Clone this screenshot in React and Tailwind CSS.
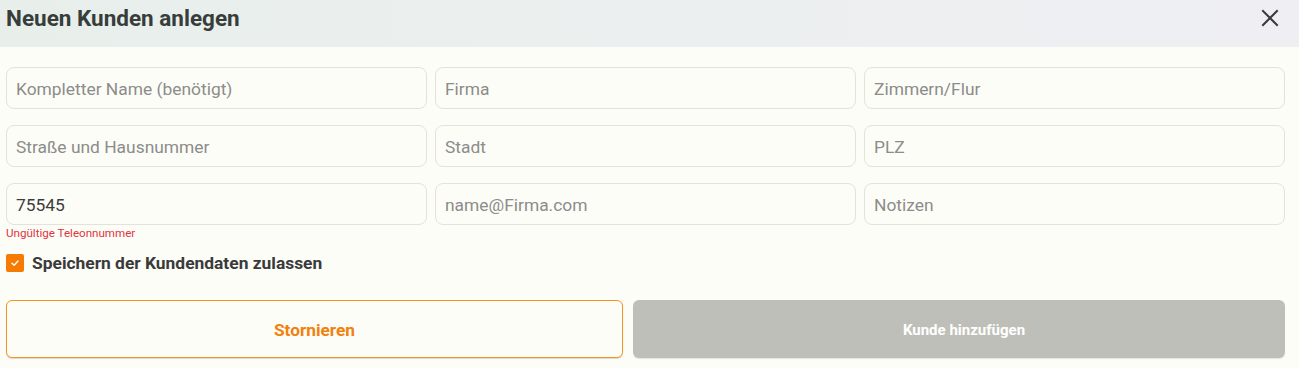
import React from "react";

function Field({ placeholder, value }) {
  return (
    <input
      readOnly
      placeholder={placeholder}
      defaultValue={value}
      className="h-[42px] w-full rounded-[8px] border border-[#e3e3dc] bg-[#fdfdf8] px-[9px] pt-[2px] text-[17.4px] text-[#3c3c3c] placeholder:text-[#8c8c8a] outline-none"
    />
  );
}

export default function App() {
  return (
    <div className="min-h-[368px] w-full bg-[#fdfdf8] font-['Roboto',sans-serif]">
      <div className="flex h-[47px] items-center justify-between bg-gradient-to-r from-[#e8efeb] to-[#efeff3] pl-[6px] pr-[20px]">
        <h1 className="text-[22.5px] font-bold text-[#373d3a] leading-none -mt-[11px]">Neuen Kunden anlegen</h1>
        <svg width="18" height="18" viewBox="0 0 18 18" className="-mt-[12px]">
          <path d="M2 2 L16 16 M16 2 L2 16" stroke="#3a3a3a" strokeWidth="2" strokeLinecap="square" />
        </svg>
      </div>
      <div className="pl-[6px] pr-[14px] pt-[20px]">
        <div className="grid grid-cols-3 gap-x-[8px] gap-y-[16px]">
          <Field placeholder="Kompletter Name (benötigt)" />
          <Field placeholder="Firma" />
          <Field placeholder="Zimmern/Flur" />
          <Field placeholder="Straße und Hausnummer" />
          <Field placeholder="Stadt" />
          <Field placeholder="PLZ" />
          <div className="relative">
            <Field value="75545" />
            <div className="absolute left-0 top-[45px] text-[11.6px] leading-none text-[#e0343f]">Ungültige Teleonnummer</div>
          </div>
          <Field placeholder="name@Firma.com" />
          <Field placeholder="Notizen" />
        </div>
        <div className="mt-[29px] flex h-[18px] items-center gap-[8px]">
          <div className="flex h-[18px] w-[18px] items-center justify-center rounded-[2px] bg-[#f57c00]">
            <svg width="10" height="10" viewBox="0 0 10 10">
              <path d="M2 5.2 L4.2 7.3 L8 3" stroke="#fff" strokeWidth="1.4" fill="none" strokeLinecap="round" strokeLinejoin="round" />
            </svg>
          </div>
          <span className="pt-[2px] text-[17.4px] font-bold leading-none text-[#3a3a3a]">Speichern der Kundendaten zulassen</span>
        </div>
        <div className="mt-[28px] flex gap-[10px]">
          <button className="h-[58px] w-[617px] rounded-[6px] border border-[#f7931e] bg-[#fdfdf8] pt-[3px] text-[17.3px] font-bold text-[#f2800c] shadow-[0_1px_1px_rgba(0,0,0,0.15)]">
            Stornieren
          </button>
          <button className="h-[58px] flex-1 rounded-[6px] bg-[#bfbfba] pl-[10px] pt-[3px] text-[15px] font-bold text-white shadow-[0_1px_1px_rgba(0,0,0,0.1)]">
            Kunde hinzufügen
          </button>
        </div>
      </div>
    </div>
  );
}
